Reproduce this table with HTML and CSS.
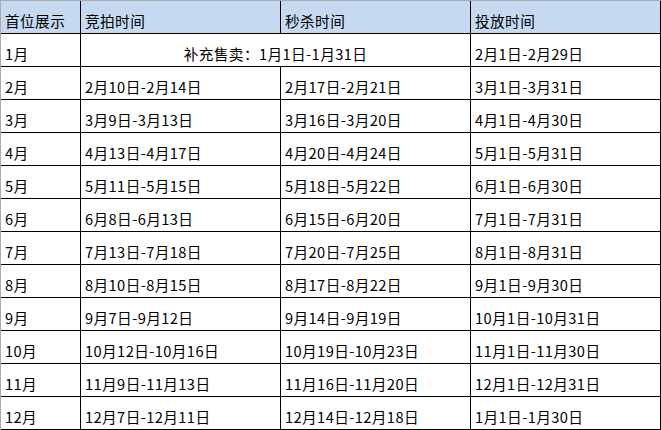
FILE: index.html
```html
<!DOCTYPE html>
<html lang="zh-CN">
<head>
<meta charset="utf-8">
<title>首位展示时间表</title>
<link rel="stylesheet" href="styles.css">
</head>
<body>
<div class="sheet">
  <div class="cell head">首位展示</div>
  <div class="cell head">竞拍时间</div>
  <div class="cell head">秒杀时间</div>
  <div class="cell head">投放时间</div>

  <div class="cell">1月</div>
  <div class="cell merged">补充售卖：1月1日-1月31日</div>
  <div class="cell">2月1日-2月29日</div>

  <div class="cell">2月</div>
  <div class="cell">2月10日-2月14日</div>
  <div class="cell">2月17日-2月21日</div>
  <div class="cell">3月1日-3月31日</div>

  <div class="cell">3月</div>
  <div class="cell">3月9日-3月13日</div>
  <div class="cell">3月16日-3月20日</div>
  <div class="cell">4月1日-4月30日</div>

  <div class="cell">4月</div>
  <div class="cell">4月13日-4月17日</div>
  <div class="cell">4月20日-4月24日</div>
  <div class="cell">5月1日-5月31日</div>

  <div class="cell">5月</div>
  <div class="cell">5月11日-5月15日</div>
  <div class="cell">5月18日-5月22日</div>
  <div class="cell">6月1日-6月30日</div>

  <div class="cell">6月</div>
  <div class="cell">6月8日-6月13日</div>
  <div class="cell">6月15日-6月20日</div>
  <div class="cell">7月1日-7月31日</div>

  <div class="cell">7月</div>
  <div class="cell">7月13日-7月18日</div>
  <div class="cell">7月20日-7月25日</div>
  <div class="cell">8月1日-8月31日</div>

  <div class="cell">8月</div>
  <div class="cell">8月10日-8月15日</div>
  <div class="cell">8月17日-8月22日</div>
  <div class="cell">9月1日-9月30日</div>

  <div class="cell">9月</div>
  <div class="cell">9月7日-9月12日</div>
  <div class="cell">9月14日-9月19日</div>
  <div class="cell">10月1日-10月31日</div>

  <div class="cell">10月</div>
  <div class="cell">10月12日-10月16日</div>
  <div class="cell">10月19日-10月23日</div>
  <div class="cell">11月1日-11月30日</div>

  <div class="cell">11月</div>
  <div class="cell">11月9日-11月13日</div>
  <div class="cell">11月16日-11月20日</div>
  <div class="cell">12月1日-12月31日</div>

  <div class="cell">12月</div>
  <div class="cell">12月7日-12月11日</div>
  <div class="cell">12月14日-12月18日</div>
  <div class="cell">1月1日-1月30日</div>
</div>
</body>
</html>
```

FILE: styles.css
```css
html, body {
  margin: 0;
  padding: 0;
  background: #ffffff;
}

.sheet {
  display: grid;
  grid-template-columns: 79px 199px 189px 189px;
  grid-auto-rows: 32px;
  gap: 1px;
  width: 660px;
  background: #000000;
  border-top: 1px solid #ababab;
  border-left: 1px solid #ababab;
  padding: 0 1px 1px 0;
  box-sizing: content-box;
  font-family: "Noto Sans CJK SC", "Noto Sans", sans-serif;
  font-size: 14.67px;
  letter-spacing: 0.4px;
  color: #000000;
}

.cell {
  background: #ffffff;
  display: flex;
  align-items: flex-end;
  padding: 0 0 2px 4px;
  line-height: 20px;
  white-space: nowrap;
  overflow: hidden;
}

.head {
  background: #c5d9f1;
}

.merged {
  grid-column: span 2;
  justify-content: center;
  padding-left: 0;
}
```
